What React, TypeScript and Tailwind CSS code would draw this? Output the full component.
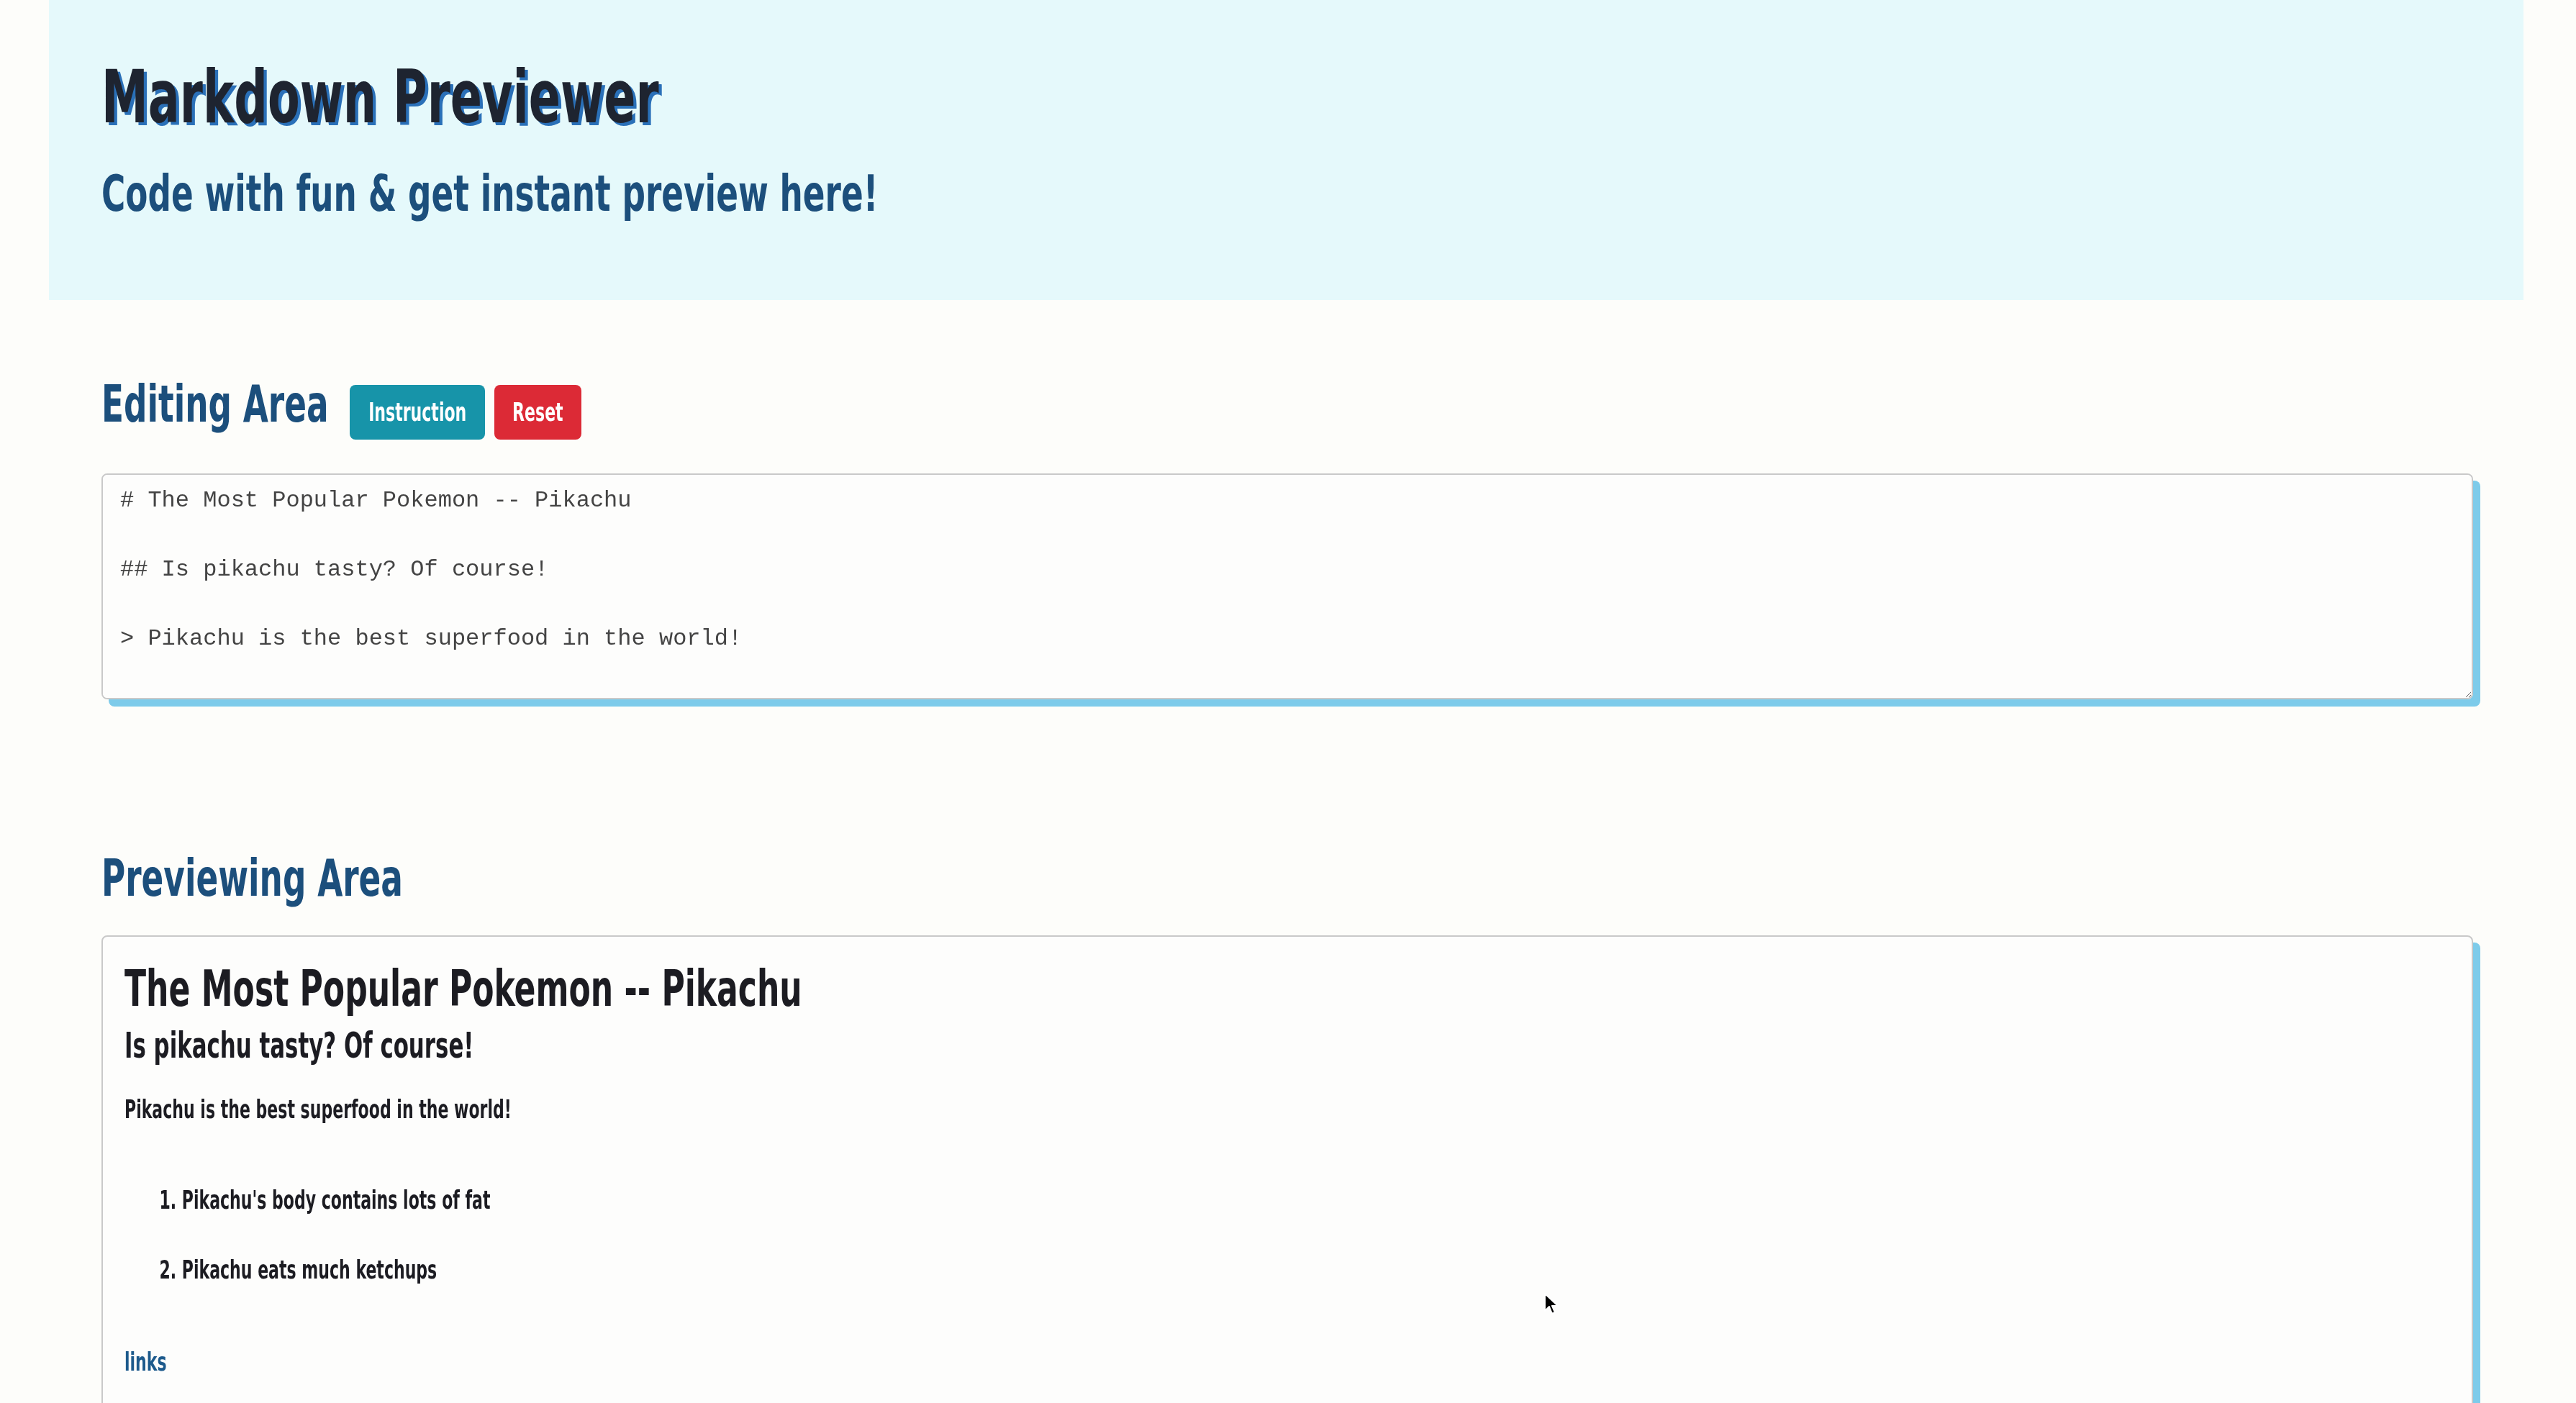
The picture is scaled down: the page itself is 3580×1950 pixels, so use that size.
// The page font is a tall, narrow grotesque; the closest installed face is
// DejaVu Sans Condensed, squeezed horizontally to the same proportions.
const condensed = "font-['DejaVu_Sans_Condensed','DejaVu_Sans',sans-serif]";

const source = `# The Most Popular Pokemon -- Pikachu

## Is pikachu tasty? Of course!

> Pikachu is the best superfood in the world!
`;

function Cursor() {
  return (
    <svg
      className="absolute left-[2145px] top-[1796px]"
      width="22"
      height="34"
      viewBox="0 0 22 34"
    >
      <path
        d="M2 2 L2 26 L8 20 L12 30 L16 28 L12 19 L20 19 Z"
        fill="#000"
        stroke="#fff"
        strokeWidth="2"
        strokeLinejoin="round"
      />
    </svg>
  );
}

export default function App() {
  return (
    <div className={`relative min-h-[1950px] bg-[#fdfdfa] ${condensed} font-bold`}>
      <div className="ml-[68px] w-[3439px]">
        <header className="bg-[#e5f9fb] pl-[73px] pt-[84px] pb-[112px]">
          <h1 className="origin-left scale-x-[0.71] whitespace-nowrap text-[102px] leading-[101px] text-[#1e2430] [text-shadow:6px_4px_0_#2a70b8]">
            Markdown Previewer
          </h1>
          <h2 className="mt-[48px] origin-left scale-x-[0.72] whitespace-nowrap text-[70px] leading-[72px] text-[#1c4f7c]">
            Code with fun &amp; get instant preview here!
          </h2>
        </header>

        <main className="pl-[73px] pr-[70px] pb-[200px]">
          <div className="mt-[106px] flex items-start">
            <h2 className="w-[311px] origin-left scale-x-[0.7] whitespace-nowrap text-[72px] leading-[76px] text-[#1c4f7c]">
              Editing Area
            </h2>
            <div className="ml-[34px] mt-[12px] flex gap-[13px]">
              <button className="flex h-[76px] w-[188px] justify-center rounded-[8px] bg-[#1794a9] text-white">
                <span className="inline-block scale-x-[0.7] whitespace-nowrap text-[35px] leading-[76px]">
                  Instruction
                </span>
              </button>
              <button className="flex h-[76px] w-[121px] justify-center rounded-[8px] bg-[#dc2a36] text-white">
                <span className="inline-block scale-x-[0.7] whitespace-nowrap text-[35px] leading-[76px]">
                  Reset
                </span>
              </button>
            </div>
          </div>

          <textarea
            className="mt-[47px] block h-[314px] w-full rounded-[8px] border-2 border-[#c9c9c9] bg-[#fdfdfc] px-[24px] py-[12px] font-['Liberation_Mono',monospace] text-[32px] leading-[48px] font-normal text-[#444] shadow-[10px_10px_0_#7dcbea] outline-none"
            defaultValue={source}
          />

          <h2 className="mt-[210px] origin-left scale-x-[0.7] whitespace-nowrap text-[72px] leading-[76px] text-[#1c4f7c]">
            Previewing Area
          </h2>

          <div className="mt-[42px] rounded-[8px] border-2 border-[#c9c9c9] bg-[#fdfdfc] pl-[30px] pt-[36px] pb-[120px] text-[#1c1c22] shadow-[10px_10px_0_#7dcbea]">
            <div className="origin-left scale-x-[0.7] whitespace-nowrap">
              <h1 className="text-[70px] leading-[72px]">The Most Popular Pokemon -- Pikachu</h1>
              <h2 className="mt-[18px] text-[49px] leading-[52px]">Is pikachu tasty? Of course!</h2>
              <blockquote className="mt-[38px] text-[35px] leading-[48px]">
                Pikachu is the best superfood in the world!
              </blockquote>
              <ol className="mt-[78px] list-decimal pl-[114px] text-[35px] leading-[48px]">
                <li>Pikachu's body contains lots of fat</li>
                <li className="mt-[49px]">Pikachu eats much ketchups</li>
              </ol>
              <a href="#" className="mt-[80px] block w-fit text-[35px] leading-[48px] text-[#1d5a8c]">
                links
              </a>
            </div>
          </div>
        </main>
      </div>
      <Cursor />
    </div>
  );
}
